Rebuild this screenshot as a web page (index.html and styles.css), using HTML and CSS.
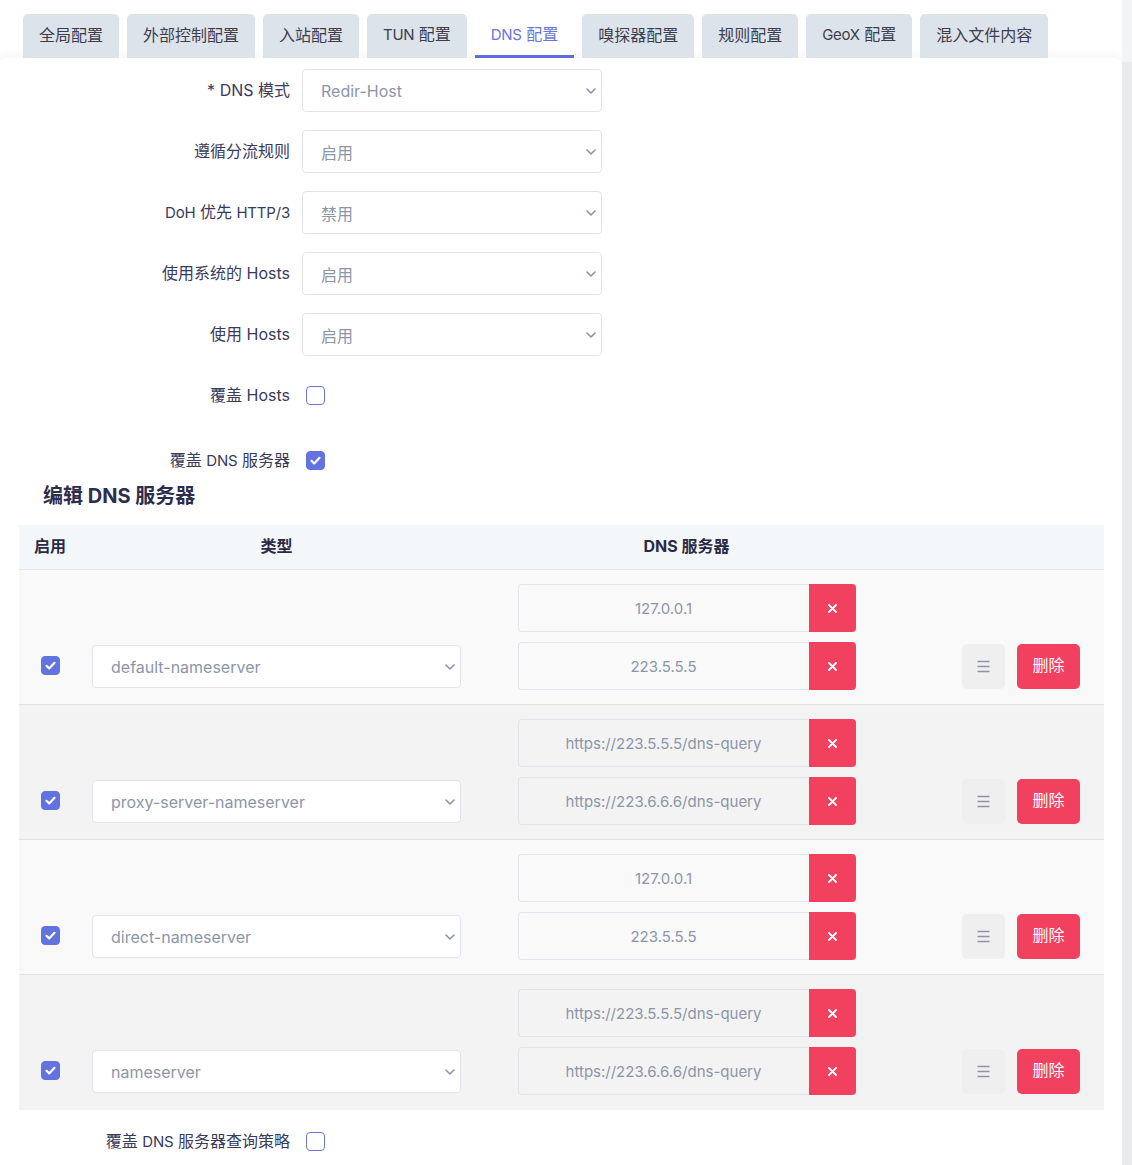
FILE: index.html
```html
<!DOCTYPE html>
<html lang="zh-CN">
<head>
<meta charset="utf-8">
<title>DNS 配置</title>
<link rel="stylesheet" href="styles.css">
</head>
<body>
<div class="app">
  <div class="main">
    <div class="tabs">
      <div class="tab"><span>全局配置</span></div>
      <div class="tab"><span>外部控制配置</span></div>
      <div class="tab"><span>入站配置</span></div>
      <div class="tab"><span><span class="lat">TUN</span> 配置</span></div>
      <div class="tab active"><span><span class="lat">DNS</span> 配置</span></div>
      <div class="tab"><span>嗅探器配置</span></div>
      <div class="tab"><span>规则配置</span></div>
      <div class="tab"><span><span class="lat">GeoX</span> 配置</span></div>
      <div class="tab"><span>混入文件内容</span></div>
    </div>

    <div class="panel">
      <div class="form">
        <div class="form-item">
          <div class="label">* DNS 模式</div>
          <div class="select"><span>Redir-Host</span><svg class="chev" width="10" height="6" viewBox="0 0 10 6"><path d="M1 1 L5 5 L9 1" fill="none" stroke="#8a94a6" stroke-width="1.6" stroke-linecap="round" stroke-linejoin="round"/></svg></div>
        </div>
        <div class="form-item">
          <div class="label">遵循分流规则</div>
          <div class="select"><span>启用</span><svg class="chev" width="10" height="6" viewBox="0 0 10 6"><path d="M1 1 L5 5 L9 1" fill="none" stroke="#8a94a6" stroke-width="1.6" stroke-linecap="round" stroke-linejoin="round"/></svg></div>
        </div>
        <div class="form-item">
          <div class="label"><span class="lat">DoH</span> 优先 <span class="lat">HTTP/3</span></div>
          <div class="select"><span>禁用</span><svg class="chev" width="10" height="6" viewBox="0 0 10 6"><path d="M1 1 L5 5 L9 1" fill="none" stroke="#8a94a6" stroke-width="1.6" stroke-linecap="round" stroke-linejoin="round"/></svg></div>
        </div>
        <div class="form-item">
          <div class="label">使用系统的 Hosts</div>
          <div class="select"><span>启用</span><svg class="chev" width="10" height="6" viewBox="0 0 10 6"><path d="M1 1 L5 5 L9 1" fill="none" stroke="#8a94a6" stroke-width="1.6" stroke-linecap="round" stroke-linejoin="round"/></svg></div>
        </div>
        <div class="form-item">
          <div class="label">使用 Hosts</div>
          <div class="select"><span>启用</span><svg class="chev" width="10" height="6" viewBox="0 0 10 6"><path d="M1 1 L5 5 L9 1" fill="none" stroke="#8a94a6" stroke-width="1.6" stroke-linecap="round" stroke-linejoin="round"/></svg></div>
        </div>
        <div class="form-item check-item">
          <div class="label">覆盖 Hosts</div>
          <div class="checkbox"></div>
        </div>
        <div class="form-item check-item last">
          <div class="label">覆盖 <span class="lat">DNS</span> 服务器</div>
          <div class="checkbox checked"><svg width="19" height="19" viewBox="0 0 19 19"><path d="M5.5 9.8 L8.2 12.4 L13.5 6.8" fill="none" stroke="#fff" stroke-width="2.2" stroke-linecap="round" stroke-linejoin="round"/></svg></div>
        </div>
      </div>

      <h2 class="section-title">编辑 DNS 服务器</h2>

      <div class="table">
        <div class="thead">
          <div class="th th-enable">启用</div>
          <div class="th th-center">类型</div>
          <div class="th th-center">DNS 服务器</div>
          <div class="th"></div>
        </div>

        <div class="tr odd">
          <div class="td td-check"><div class="checkbox checked"><svg width="19" height="19" viewBox="0 0 19 19"><path d="M5.5 9.8 L8.2 12.4 L13.5 6.8" fill="none" stroke="#fff" stroke-width="2.2" stroke-linecap="round" stroke-linejoin="round"/></svg></div></div>
          <div class="td td-type"><div class="select select-wide"><span>default-nameserver</span><svg class="chev" width="10" height="6" viewBox="0 0 10 6"><path d="M1 1 L5 5 L9 1" fill="none" stroke="#8a94a6" stroke-width="1.6" stroke-linecap="round" stroke-linejoin="round"/></svg></div></div>
          <div class="td td-servers">
            <div class="server"><div class="server-input">127.0.0.1</div><div class="x-btn"><svg width="9" height="9" viewBox="0 0 9 9"><path d="M1 1 L8 8 M8 1 L1 8" stroke="#fff" stroke-width="1.8" stroke-linecap="round"/></svg></div></div>
            <div class="server"><div class="server-input">223.5.5.5</div><div class="x-btn"><svg width="9" height="9" viewBox="0 0 9 9"><path d="M1 1 L8 8 M8 1 L1 8" stroke="#fff" stroke-width="1.8" stroke-linecap="round"/></svg></div></div>
          </div>
          <div class="td td-actions">
            <div class="menu-btn"><svg width="13" height="13" viewBox="0 0 13 13"><path d="M0.5 1.5 H12.5 M0.5 6.5 H12.5 M0.5 11.5 H12.5" stroke="#8b95a5" stroke-width="1.3"/></svg></div>
            <div class="del-btn">删除</div>
          </div>
        </div>

        <div class="tr even">
          <div class="td td-check"><div class="checkbox checked"><svg width="19" height="19" viewBox="0 0 19 19"><path d="M5.5 9.8 L8.2 12.4 L13.5 6.8" fill="none" stroke="#fff" stroke-width="2.2" stroke-linecap="round" stroke-linejoin="round"/></svg></div></div>
          <div class="td td-type"><div class="select select-wide"><span>proxy-server-nameserver</span><svg class="chev" width="10" height="6" viewBox="0 0 10 6"><path d="M1 1 L5 5 L9 1" fill="none" stroke="#8a94a6" stroke-width="1.6" stroke-linecap="round" stroke-linejoin="round"/></svg></div></div>
          <div class="td td-servers">
            <div class="server"><div class="server-input">https://223.5.5.5/dns-query</div><div class="x-btn"><svg width="9" height="9" viewBox="0 0 9 9"><path d="M1 1 L8 8 M8 1 L1 8" stroke="#fff" stroke-width="1.8" stroke-linecap="round"/></svg></div></div>
            <div class="server"><div class="server-input">https://223.6.6.6/dns-query</div><div class="x-btn"><svg width="9" height="9" viewBox="0 0 9 9"><path d="M1 1 L8 8 M8 1 L1 8" stroke="#fff" stroke-width="1.8" stroke-linecap="round"/></svg></div></div>
          </div>
          <div class="td td-actions">
            <div class="menu-btn"><svg width="13" height="13" viewBox="0 0 13 13"><path d="M0.5 1.5 H12.5 M0.5 6.5 H12.5 M0.5 11.5 H12.5" stroke="#8b95a5" stroke-width="1.3"/></svg></div>
            <div class="del-btn">删除</div>
          </div>
        </div>

        <div class="tr odd">
          <div class="td td-check"><div class="checkbox checked"><svg width="19" height="19" viewBox="0 0 19 19"><path d="M5.5 9.8 L8.2 12.4 L13.5 6.8" fill="none" stroke="#fff" stroke-width="2.2" stroke-linecap="round" stroke-linejoin="round"/></svg></div></div>
          <div class="td td-type"><div class="select select-wide"><span>direct-nameserver</span><svg class="chev" width="10" height="6" viewBox="0 0 10 6"><path d="M1 1 L5 5 L9 1" fill="none" stroke="#8a94a6" stroke-width="1.6" stroke-linecap="round" stroke-linejoin="round"/></svg></div></div>
          <div class="td td-servers">
            <div class="server"><div class="server-input">127.0.0.1</div><div class="x-btn"><svg width="9" height="9" viewBox="0 0 9 9"><path d="M1 1 L8 8 M8 1 L1 8" stroke="#fff" stroke-width="1.8" stroke-linecap="round"/></svg></div></div>
            <div class="server"><div class="server-input">223.5.5.5</div><div class="x-btn"><svg width="9" height="9" viewBox="0 0 9 9"><path d="M1 1 L8 8 M8 1 L1 8" stroke="#fff" stroke-width="1.8" stroke-linecap="round"/></svg></div></div>
          </div>
          <div class="td td-actions">
            <div class="menu-btn"><svg width="13" height="13" viewBox="0 0 13 13"><path d="M0.5 1.5 H12.5 M0.5 6.5 H12.5 M0.5 11.5 H12.5" stroke="#8b95a5" stroke-width="1.3"/></svg></div>
            <div class="del-btn">删除</div>
          </div>
        </div>

        <div class="tr even last">
          <div class="td td-check"><div class="checkbox checked"><svg width="19" height="19" viewBox="0 0 19 19"><path d="M5.5 9.8 L8.2 12.4 L13.5 6.8" fill="none" stroke="#fff" stroke-width="2.2" stroke-linecap="round" stroke-linejoin="round"/></svg></div></div>
          <div class="td td-type"><div class="select select-wide"><span>nameserver</span><svg class="chev" width="10" height="6" viewBox="0 0 10 6"><path d="M1 1 L5 5 L9 1" fill="none" stroke="#8a94a6" stroke-width="1.6" stroke-linecap="round" stroke-linejoin="round"/></svg></div></div>
          <div class="td td-servers">
            <div class="server"><div class="server-input">https://223.5.5.5/dns-query</div><div class="x-btn"><svg width="9" height="9" viewBox="0 0 9 9"><path d="M1 1 L8 8 M8 1 L1 8" stroke="#fff" stroke-width="1.8" stroke-linecap="round"/></svg></div></div>
            <div class="server"><div class="server-input">https://223.6.6.6/dns-query</div><div class="x-btn"><svg width="9" height="9" viewBox="0 0 9 9"><path d="M1 1 L8 8 M8 1 L1 8" stroke="#fff" stroke-width="1.8" stroke-linecap="round"/></svg></div></div>
          </div>
          <div class="td td-actions">
            <div class="menu-btn"><svg width="13" height="13" viewBox="0 0 13 13"><path d="M0.5 1.5 H12.5 M0.5 6.5 H12.5 M0.5 11.5 H12.5" stroke="#8b95a5" stroke-width="1.3"/></svg></div>
            <div class="del-btn">删除</div>
          </div>
        </div>
      </div>

      <div class="form-item check-item bottom-item">
        <div class="label">覆盖 <span class="lat">DNS</span> 服务器查询策略</div>
        <div class="checkbox"></div>
      </div>
    </div>
  </div>
  <div class="scrollbar"></div>
</div>
</body>
</html>
```

FILE: styles.css
```css
* {
  box-sizing: border-box;
}

html,
body {
  margin: 0;
  padding: 0;
  background: #ffffff;
}

body {
  font-family: Inter, "Noto Sans CJK SC", sans-serif;
  font-size: 16px;
  color: #3a3a5c;
}

.app {
  display: flex;
  width: 1132px;
  min-height: 1165px;
}

.main {
  width: 1122px;
  flex: none;
}

.scrollbar {
  width: 10px;
  flex: none;
  background: linear-gradient(#f2f4f6 0, #f2f4f6 62px, #e9ecef 62px);
}

/* Tabs */
.tabs {
  display: flex;
  gap: 8px;
  padding: 14px 0 0 23px;
  height: 58px;
}

.tab {
  height: 44px;
  padding: 0 16px;
  background: #dde3ea;
  border-radius: 5px 5px 0 0;
  border-bottom: 3px solid transparent;
  display: flex;
  align-items: center;
  color: #3d3d4c;
  font-size: 16px;
  line-height: 20px;
  white-space: nowrap;
}

.tab .lat {
  font-size: 15px;
  letter-spacing: -0.3px;
}

.tab.active {
  background: #ffffff;
  color: #6a76d8;
  border-bottom-color: #5f6bdb;
}

/* Panel */
.panel {
  background: #ffffff;
  border-radius: 6px 6px 0 0;
  box-shadow: 0 -3px 10px rgba(0, 0, 0, 0.045);
  padding-top: 11px;
  padding-bottom: 20px;
}

.form {
  display: flex;
  flex-direction: column;
}

.form-item {
  display: flex;
  align-items: center;
  height: 43px;
  margin-bottom: 18px;
}

.form-item.check-item {
  margin-bottom: 22px;
}

.form-item.last {
  margin-bottom: 0;
}

.label {
  width: 302px;
  padding-right: 12px;
  padding-bottom: 1px;
  text-align: right;
  color: #3a3a5c;
  font-size: 16px;
  line-height: 20px;
  white-space: nowrap;
}

.label .lat {
  font-size: 15px;
  letter-spacing: -0.2px;
}

.select {
  width: 300px;
  height: 43px;
  border: 1px solid #e1e4e9;
  border-radius: 4px;
  background: #ffffff;
  display: flex;
  align-items: center;
  justify-content: space-between;
  padding: 0 5px 0 18px;
  color: #8c96a8;
  font-size: 16px;
}

.select-wide {
  width: 369px;
}

.chev {
  flex: none;
}

.checkbox {
  width: 19px;
  height: 19px;
  border: 1.5px solid #6b78de;
  border-radius: 4px;
  background: #ffffff;
  margin-left: 4px;
  flex: none;
}

.checkbox svg {
  display: block;
  margin: -1.5px;
}

.checkbox.checked {
  background: #6272de;
  border-color: #6272de;
}

.section-title {
  margin: 0;
  padding-left: 43px;
  font-size: 20px;
  line-height: 28px;
  font-weight: 700;
  color: #2d2d4d;
}

/* Table */
.table {
  margin: 15px 18px 0 19px;
}

.thead,
.tr {
  display: grid;
  grid-template-columns: 73px 369px 451px 192px;
}

.thead {
  height: 45px;
  background: #f4f7fa;
  border-bottom: 1px solid #e2e5ea;
  align-items: center;
  padding-bottom: 2px;
}

.th {
  font-size: 16px;
  line-height: 20px;
  font-weight: 700;
  color: #2b2b45;
}

.th-enable {
  padding-left: 15px;
}

.th-center {
  text-align: center;
}

.tr {
  padding: 14px 0 14px;
  border-bottom: 1px solid #e2e2e4;
  align-items: end;
}

.tr.last {
  border-bottom: none;
  padding-bottom: 15px;
}

.tr.odd {
  background: #f9f9f9;
}

.tr.even {
  background: #f3f3f3;
}

.td-check {
  padding-left: 22px;
  padding-bottom: 15px;
}

.td-check .checkbox {
  margin-left: 0;
}

.td-type {
  padding-bottom: 2px;
}

.td-servers {
  display: flex;
  flex-direction: column;
  align-items: center;
  gap: 10px;
}

.server {
  display: flex;
  width: 338px;
  height: 48px;
}

.server-input {
  width: 291px;
  height: 48px;
  border: 1px solid #e2e4e9;
  border-right: none;
  border-radius: 4px 0 0 4px;
  display: flex;
  align-items: center;
  justify-content: center;
  color: #8c96a8;
  font-size: 15px;
}

.x-btn {
  width: 47px;
  height: 48px;
  background: #f2405f;
  border-radius: 0 4px 4px 0;
  display: flex;
  align-items: center;
  justify-content: center;
}

.td-actions {
  display: flex;
  justify-content: flex-end;
  gap: 12px;
  padding-right: 24px;
  padding-bottom: 1px;
}

.menu-btn {
  width: 43px;
  height: 45px;
  background: #efefef;
  border-radius: 5px;
  display: flex;
  align-items: center;
  justify-content: center;
}

.del-btn {
  width: 63px;
  height: 45px;
  background: #f2405f;
  border-radius: 5px;
  color: #ffffff;
  font-size: 16px;
  line-height: 20px;
  padding-bottom: 3px;
  display: flex;
  align-items: center;
  justify-content: center;
}

.bottom-item {
  margin-top: 10px;
  margin-bottom: 0;
}
```
